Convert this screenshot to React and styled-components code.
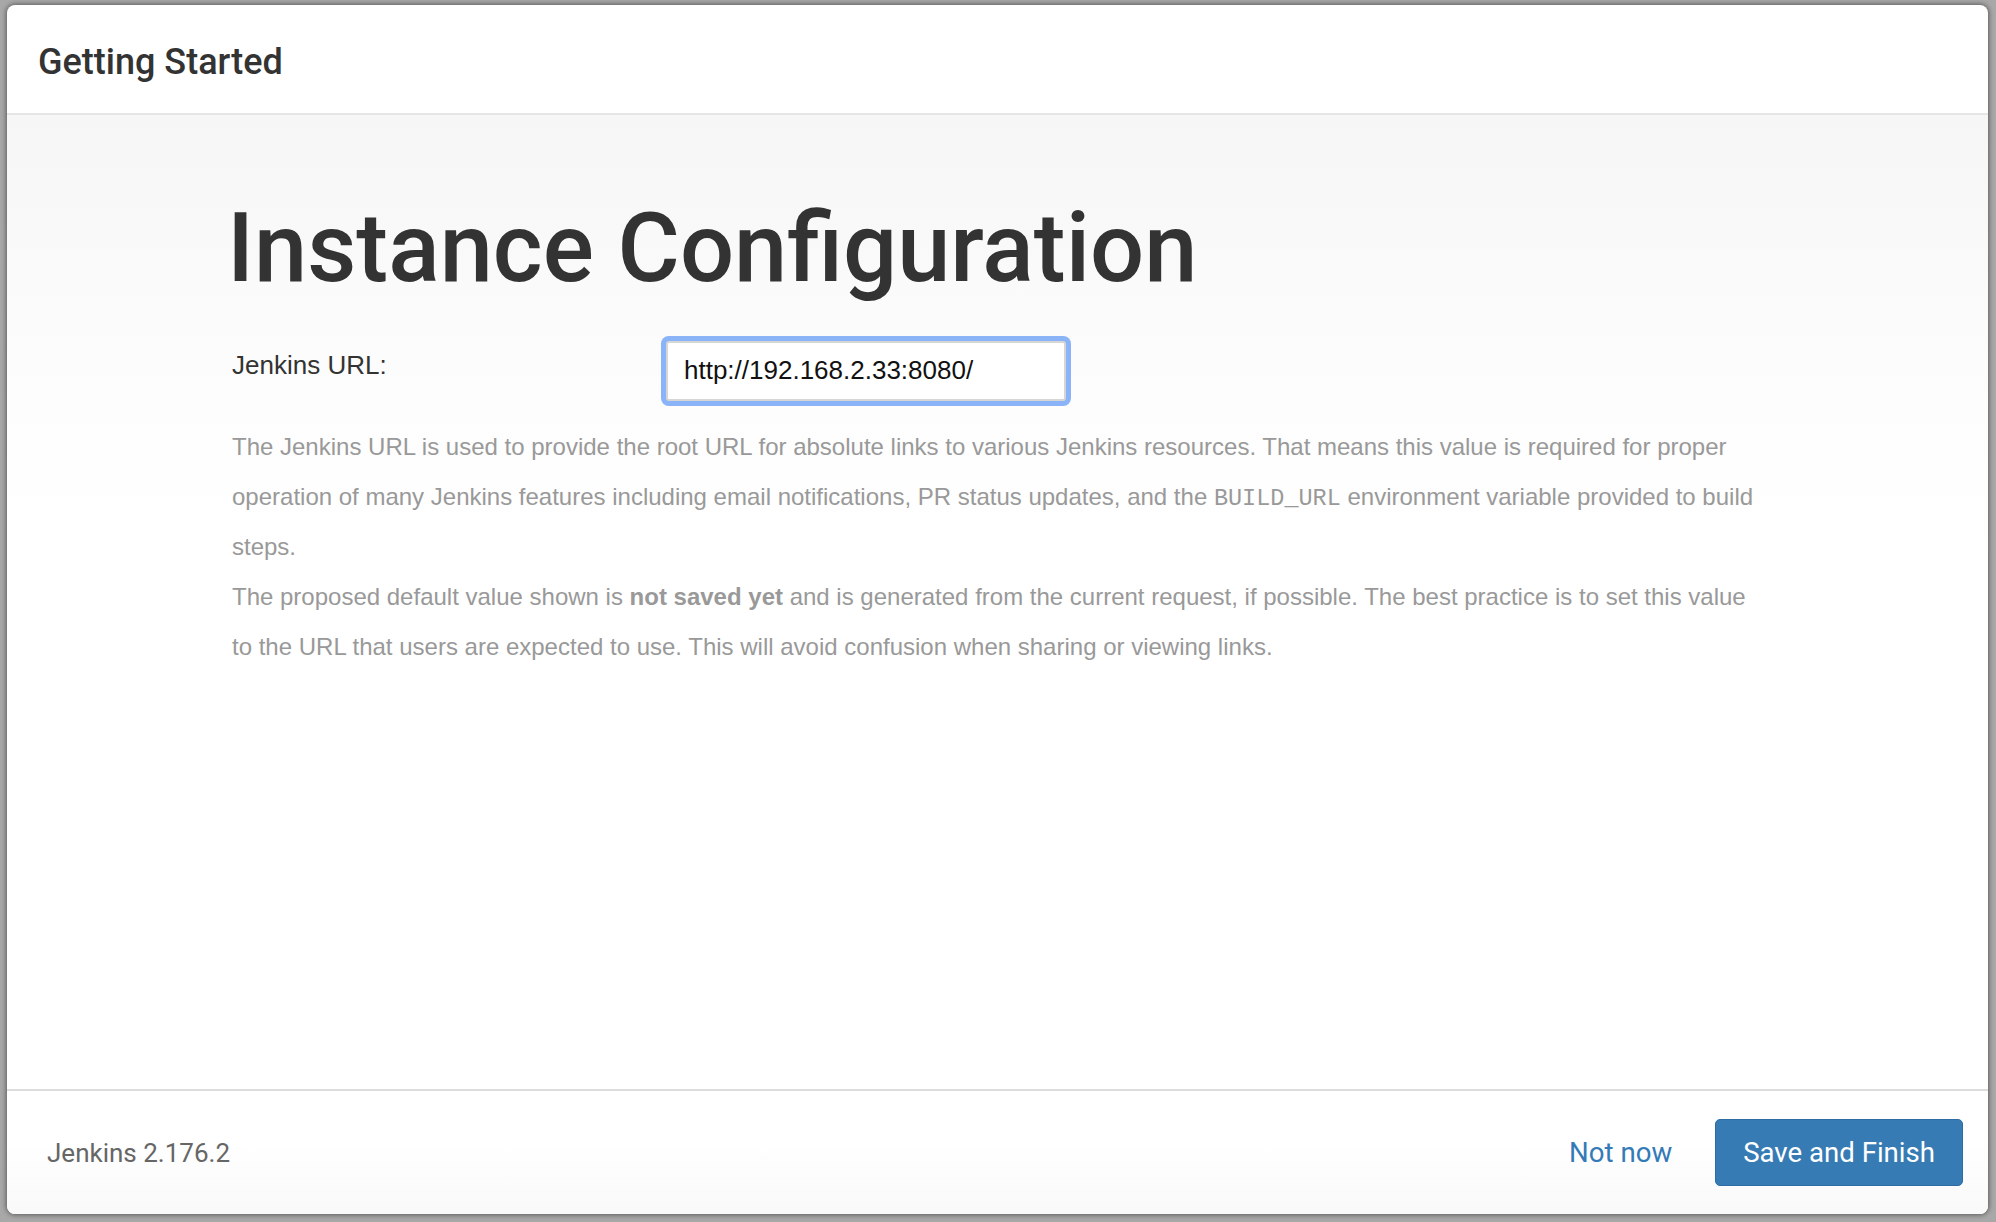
import React from "react";
import styled, { createGlobalStyle } from "styled-components";

const GlobalStyle = createGlobalStyle`
  html, body {
    margin: 0;
    padding: 0;
    background: #a8a8a8;
  }
  * {
    box-sizing: border-box;
  }
`;

const Backdrop = styled.div`
  height: 1222px;
  padding: 5px 8px 8px 7px;
`;

const Modal = styled.div`
  display: flex;
  flex-direction: column;
  height: 100%;
  background: #fff;
  border-radius: 8px;
  overflow: hidden;
  box-shadow: 0 0 5px 1px rgba(0, 0, 0, 0.45);
`;

const Header = styled.header`
  display: flex;
  align-items: center;
  height: 110px;
  padding: 6px 31px 0;
  border-bottom: 2px solid #e5e5e5;
`;

const HeaderTitle = styled.h4`
  margin: 0;
  font-family: Roboto, "Liberation Sans", sans-serif;
  font-weight: 500;
  font-size: 36px;
  color: #333;
`;

const Body = styled.main`
  flex: 1;
  padding: 86px 225px 0 220px;
  background: linear-gradient(to bottom, #f6f6f6 0%, #fdfdfd 30%, #fff 45%);
`;

const Title = styled.h1`
  margin: 0;
  font-family: Roboto, "Liberation Sans", sans-serif;
  font-weight: 500;
  font-size: 95.5px;
  line-height: 1;
  color: #333;
`;

const FieldRow = styled.div`
  display: grid;
  grid-template-columns: 434px 400px;
  align-items: start;
  margin-top: 44px;
  padding-left: 5px;
`;

const Label = styled.label`
  padding-top: 9px;
  font-family: "Liberation Sans", Arial, sans-serif;
  font-size: 26px;
  color: #333;
`;

const UrlInput = styled.input`
  width: 400px;
  height: 60px;
  padding: 0 16px;
  border: 2px solid #d6d6d6;
  border-radius: 3px;
  box-shadow: 0 0 0 5px #8ab4f7;
  outline: none;
  background: #fff;
  font-family: "Liberation Sans", Arial, sans-serif;
  font-size: 26px;
  color: #111;
`;

const Help = styled.div`
  margin-top: 21px;
  padding-left: 5px;
  font-family: "Liberation Sans", Arial, sans-serif;
  font-size: 24px;
  line-height: 50px;
  color: #999;

  p {
    margin: 0;
  }
  b {
    font-weight: 700;
  }
  code {
    font-family: "Liberation Mono", "Courier New", monospace;
    font-size: 23.5px;
    line-height: 0;
  }
`;

const Footer = styled.footer`
  display: flex;
  align-items: center;
  justify-content: space-between;
  height: 125px;
  padding: 0 25px 0 40px;
  border-top: 2px solid #dcdcdc;
  background: linear-gradient(to bottom, #fff 40%, #f9f9f9);
`;

const Version = styled.span`
  font-family: Roboto, "Liberation Sans", sans-serif;
  font-size: 26px;
  color: #666;
`;

const Actions = styled.div`
  display: flex;
  align-items: center;
  gap: 43px;
`;

const LinkButton = styled.a`
  font-family: Roboto, "Liberation Sans", sans-serif;
  font-size: 27.6px;
  color: #337ab7;
  text-decoration: none;
  cursor: pointer;
`;

const PrimaryButton = styled.button`
  height: 67px;
  padding: 0 27px;
  border: 1px solid #2e6da4;
  border-radius: 5px;
  background: #377bb5;
  font-family: Roboto, "Liberation Sans", sans-serif;
  font-size: 27.6px;
  color: #fff;
  cursor: pointer;
`;

export default function App() {
  return (
    <>
      <GlobalStyle />
      <Backdrop>
        <Modal>
          <Header>
            <HeaderTitle>Getting Started</HeaderTitle>
          </Header>
          <Body>
            <Title>Instance Configuration</Title>
            <FieldRow>
              <Label htmlFor="root-url">Jenkins URL:</Label>
              <UrlInput id="root-url" defaultValue="http://192.168.2.33:8080/" />
            </FieldRow>
            <Help>
              <p>
                The Jenkins URL is used to provide the root URL for absolute links to various Jenkins
                resources. That means this value is required for proper operation of many Jenkins
                features including email notifications, PR status updates, and the{" "}
                <code>BUILD_URL</code> environment variable provided to build steps.
              </p>
              <p>
                The proposed default value shown is <b>not saved yet</b> and is generated from the
                current request, if possible. The best practice is to set this value to the URL that
                users are expected to use. This will avoid confusion when sharing or viewing links.
              </p>
            </Help>
          </Body>
          <Footer>
            <Version>Jenkins 2.176.2</Version>
            <Actions>
              <LinkButton>Not now</LinkButton>
              <PrimaryButton>Save and Finish</PrimaryButton>
            </Actions>
          </Footer>
        </Modal>
      </Backdrop>
    </>
  );
}
